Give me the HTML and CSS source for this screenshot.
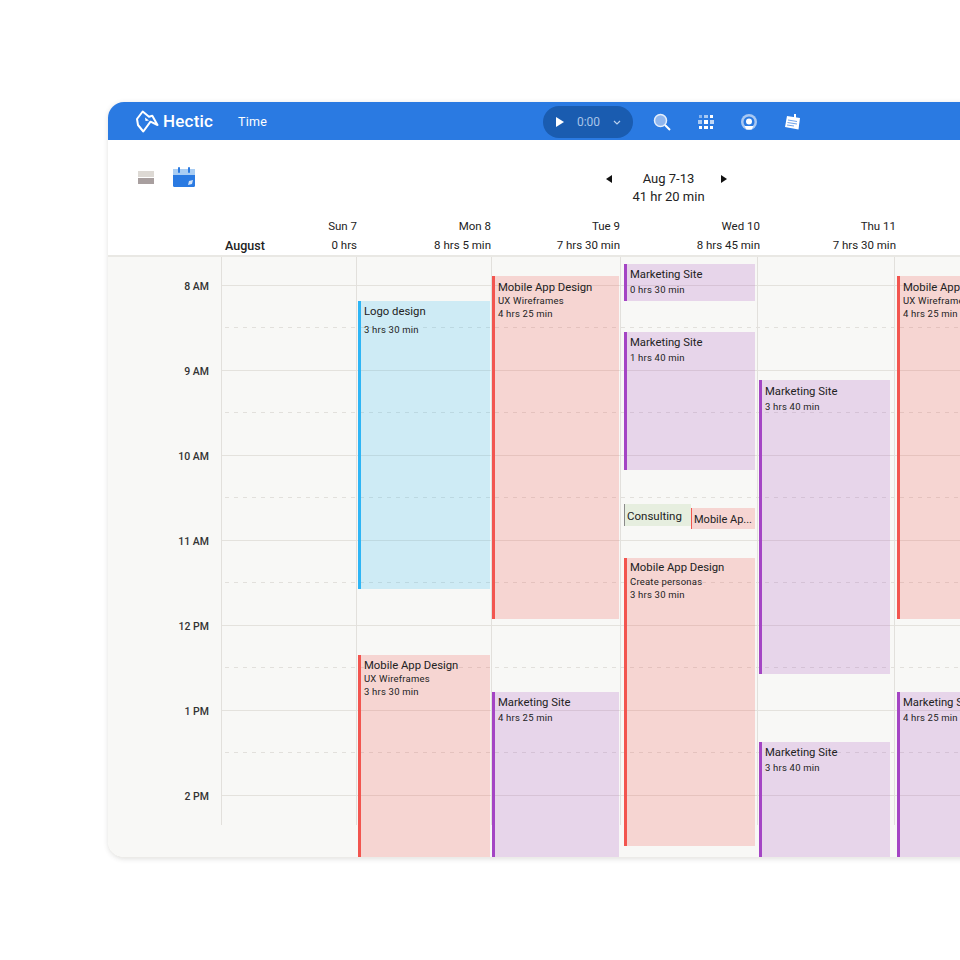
FILE: index.html
```html
<!DOCTYPE html>
<html>
  <head>
    <meta http-equiv="content-type" content="text/html; charset=utf-8" />
    <title>Hectic Time</title>
    <link rel="stylesheet" href="styles.css">
  </head>
  <body>
    <div class="window">
      <div class="topbar">
        <svg class="logo" viewBox="0 0 23 25" width="23" height="25"><path d="M1 10 L6.700 2.500 L13 7.700 L16.300 6.700 L21.500 16 L14.500 12.700 L7.300 22.500 L2 16 Z" fill="none" stroke="#fff" stroke-width="2" stroke-linejoin="round"/><path d="M9 8.500 L13 11.500 L9.500 12 Z" fill="#fff"/></svg>
        <span class="brand">Hectic</span>
        <span class="nav_time">Time</span>
        <div class="timer">
          <svg viewBox="0 0 8 10" width="8" height="10"><path d="M0 0 L8 5 L0 10 Z" fill="#fff"/></svg>
          <span class="timer_value">0:00</span>
          <svg viewBox="0 0 8 5" width="8" height="5"><path d="M1 1 L4 4 L7 1" fill="none" stroke="#b9d0ee" stroke-width="1.200"/></svg>
        </div>
        <div class="tools">
          <svg viewBox="0 0 18 18" width="18" height="18"><circle cx="7.500" cy="7.500" r="6" fill="#8fb6ee" stroke="#e4eefb" stroke-width="1.500"/><path d="M12 12 L17 17" stroke="#fff" stroke-width="2"/></svg>
          <svg viewBox="0 0 16 16" width="16" height="16" fill="#fff"><rect x="1" y="1" width="3" height="3" opacity=".45"/><rect x="6" y="1" width="4" height="3" opacity=".6"/><rect x="12" y="1" width="3" height="3"/><rect x="0" y="6" width="4" height="4" opacity=".6"/><rect x="6" y="6" width="4" height="4"/><rect x="12" y="6" width="4" height="4" opacity=".7"/><rect x="1" y="12" width="3" height="3"/><rect x="6" y="12" width="4" height="3"/><rect x="12" y="12" width="3" height="3"/></svg>
          <svg viewBox="0 0 16 16" width="16" height="16"><circle cx="8" cy="8" r="8" fill="#a9c8f2"/><circle cx="8" cy="8" r="5.500" fill="#2a7ae2"/><circle cx="8" cy="7.500" r="3" fill="#fff"/><path d="M3.500 12 H12.500 L10.500 15.500 H5.500 Z" fill="#fff"/></svg>
          <svg viewBox="0 0 18 18" width="18" height="18"><path d="M3 3 L16 5 L14.500 16.500 L1 14 Z" fill="#fff"/><path d="M11 1 V6" stroke="#fff" stroke-width="2"/><path d="M4 7 L13 8.500 M3.500 9.500 L13 11 M3 12 L10 13" stroke="#6fa3ea" stroke-width="1"/></svg>
        </div>
      </div>

      <div class="toolbar">
        <div class="views">
          <div class="view_list"><span></span><span></span></div>
          <svg viewBox="0 0 22 20" width="22" height="20"><rect x="0" y="2" width="22" height="18" rx="1.500" fill="#2a7ae2"/><rect x="0" y="2" width="22" height="6" fill="#a9cdf3"/><rect x="5" y="0" width="2" height="6" rx="1" fill="#2a7ae2"/><rect x="15" y="0" width="2" height="6" rx="1" fill="#2a7ae2"/><path d="M15 18 L16 14 L20 13 L19 17 Z" fill="#cfe1f8"/></svg>
        </div>
        <div class="week">
          <div class="week_nav">
            <span class="arrow_left"></span>
            <span class="week_dates">Aug 7-13</span>
            <span class="arrow_right"></span>
          </div>
          <div class="week_total">41 hr 20 min</div>
        </div>
      </div>

      <div class="columns day_heads">
        <div class="corner"></div>
        <div class="day_head first"><span class="month">August</span><div>Sun 7<br>0 hrs</div></div>
        <div class="day_head">Mon 8<br>8 hrs 5 min</div>
        <div class="day_head">Tue 9<br>7 hrs 30 min</div>
        <div class="day_head wed">Wed 10<br>8 hrs 45 min</div>
        <div class="day_head thu">Thu 11<br>7 hrs 30 min</div>
        <div class="day_head"></div>
      </div>

      <div class="body">
        <div class="hour_lines">
          <div class="hour"></div>
          <div class="hour"></div>
          <div class="hour"></div>
          <div class="hour"></div>
          <div class="hour"></div>
          <div class="hour"></div>
          <div class="hour last"></div>
        </div>
        <div class="columns">
          <div class="hours">
            <div>8 AM</div>
            <div>9 AM</div>
            <div>10 AM</div>
            <div>11 AM</div>
            <div>12 PM</div>
            <div>1 PM</div>
            <div>2 PM</div>
          </div>
          <div class="day"></div>
          <div class="day">
            <div class="track track_mon">
              <div class="event blue" style="top:44px;height:288px"><b class="title">Logo design</b><span class="loose">3 hrs 30 min</span></div>
              <div class="event red" style="top:398px;height:203px"><b class="title">Mobile App Design</b><span>UX Wireframes</span><span>3 hrs 30 min</span></div>
            </div>
          </div>
          <div class="day">
            <div class="track track_tue">
              <div class="event red lower" style="top:19px;height:343px"><b class="title">Mobile App Design</b><span>UX Wireframes</span><span>4 hrs 25 min</span></div>
              <div class="event purple" style="top:435px;height:166px"><b class="title">Marketing Site</b><span>4 hrs 25 min</span></div>
            </div>
          </div>
          <div class="day">
            <div class="track track_wed">
              <div class="event purple" style="top:7px;height:37px"><b class="title">Marketing Site</b><span>0 hrs 30 min</span></div>
              <div class="event purple" style="top:75px;height:138px"><b class="title">Marketing Site</b><span>1 hrs 40 min</span></div>
              <div class="event green tiny" style="top:247px;height:22px;left:0;width:67px"><b class="title">Consulting</b></div>
              <div class="event red tiny" style="top:251px;height:21px;left:67px;right:0"><b class="title">Mobile Ap...</b></div>
              <div class="event red upper" style="top:301px;height:288px"><b class="title">Mobile App Design</b><span>Create personas</span><span>3 hrs 30 min</span></div>
            </div>
          </div>
          <div class="day">
            <div class="track track_thu">
              <div class="event purple lower" style="top:123px;height:294px"><b class="title">Marketing Site</b><span>3 hrs 40 min</span></div>
              <div class="event purple" style="top:485px;height:116px"><b class="title">Marketing Site</b><span>3 hrs 40 min</span></div>
            </div>
          </div>
          <div class="day">
            <div class="track track_fri">
              <div class="event red lower" style="top:19px;height:343px"><b class="title">Mobile App Design</b><span>UX Wireframes</span><span>4 hrs 25 min</span></div>
              <div class="event purple" style="top:435px;height:166px"><b class="title">Marketing Site</b><span>4 hrs 25 min</span></div>
            </div>
          </div>
        </div>
      </div>
    </div>
  </body>
</html>
```

FILE: styles.css
```css
html, body {
  margin: 0;
  padding: 0;
  height: 100%;
  overflow: hidden;
  background: #fff;
}

body {
  font-family: "Roboto", "Liberation Sans", sans-serif;
  color: #222;
}

.window {
  width: 1000px;
  height: 756px;
  box-sizing: border-box;
  margin: 102px 0 0 108px;
  border-bottom: 1px solid #ecebe8;
  border-radius: 16px 0 0 16px;
  overflow: hidden;
  background: #fff;
  box-shadow: 0 1px 5px rgba(60, 60, 50, 0.16);
  display: flex;
  flex-direction: column;
}

/* top blue bar */
.topbar {
  height: 38px;
  background: #2a7ae2;
  display: flex;
  align-items: center;
  padding-left: 28px;
  color: #fff;
  flex-shrink: 0;
}

.brand {
  font-size: 17px;
  font-weight: 500;
  letter-spacing: 0.2px;
  margin-left: 4px;
}

.nav_time {
  font-size: 12.500px;
  letter-spacing: 0.2px;
  margin-left: 25px;
}

.timer {
  width: 90px;
  height: 32px;
  margin: 2px 0 0 276px;
  padding: 0 12px 0 13px;
  box-sizing: border-box;
  border-radius: 16px;
  background: #1a5cb0;
  display: flex;
  align-items: center;
  justify-content: space-between;
}

.timer_value {
  font-size: 12px;
  color: #a8c4e8;
}

.tools {
  display: flex;
  align-items: center;
  gap: 27px;
  margin: 2px 0 0 20px;
}

/* view switch + week */
.toolbar {
  height: 75px;
  display: flex;
  flex-shrink: 0;
}

.views {
  display: flex;
  align-items: flex-start;
  gap: 19px;
  padding: 27px 0 0 30px;
}

.view_list {
  width: 16px;
  margin-top: 4px;
}

.view_list span {
  display: block;
  height: 6px;
  background: #ddd9d4;
}

.view_list span + span {
  margin-top: 1px;
  background: #a89f9f;
}

.week {
  margin-left: 411px;
  width: 121px;
  padding-top: 30px;
  text-align: center;
  font-size: 13px;
  line-height: 18px;
}

.week_nav {
  display: flex;
  align-items: center;
  justify-content: space-between;
}

.week_dates {
  margin-left: 4px;
}

.week_total {
  padding-left: 4px;
}

.arrow_left, .arrow_right {
  width: 0;
  height: 0;
  border-top: 4.500px solid transparent;
  border-bottom: 4.500px solid transparent;
}

.arrow_left {
  border-right: 6px solid #111;
}

.arrow_right {
  border-left: 6px solid #111;
}

/* shared column widths */
.columns {
  display: grid;
  grid-template-columns: 113px 135px 135px 129px 137px 137px 137px;
}

.day_heads {
  height: 40px;
  flex-shrink: 0;
  border-bottom: 2px solid #e9e8e4;
}

.day_head {
  text-align: right;
  font-size: 11.500px;
  line-height: 19px;
  color: #222;
  padding-top: 2px;
}

.day_head.first {
  display: flex;
  justify-content: space-between;
  align-items: flex-end;
  margin-right: -1px;
}

.day_head.wed {
  margin-right: -3px;
}

.day_head.thu {
  margin-right: -2px;
}

.month {
  font-size: 12.500px;
  font-weight: 500;
  margin-left: 4px;
}

/* calendar body */
.body {
  position: relative;
  flex: 1;
  background: #f8f8f6;
}

.hour_lines {
  position: absolute;
  top: 28px;
  left: 113px;
  right: 0;
  border-top: 1px solid #e4e2dd;
}

.hour {
  height: 84px;
  border-bottom: 1px solid #e4e2dd;
  position: relative;
}

.hour::after {
  content: "";
  position: absolute;
  left: 4px;
  right: 0;
  top: 41px;
  height: 1px;
  background: repeating-linear-gradient(90deg, #e2e0dc 0 4px, transparent 4px 9px);
}

.hour.last::after {
  display: none;
}

.body .columns {
  position: relative;
  height: 100%;
}

.hours {
  text-align: right;
  padding: 22px 12px 0 0;
  font-size: 10.500px;
  font-weight: 500;
  color: #333;
}

.hours div {
  height: 85px;
  line-height: 15px;
}

.day {
  background: linear-gradient(#e2e0dc, #e2e0dc) left top / 1px 568px no-repeat;
}

.track {
  position: relative;
  height: 100%;
}

.track_mon {
  margin: 0 1px 0 2px;
}

.track_tue {
  margin: 0 1px 0 1px;
}

.track_wed {
  margin: 0 2px 0 4px;
}

.track_thu {
  margin: 0 4px 0 2px;
}

.track_fri {
  margin: 0 0 0 3px;
}

/* events */
.event {
  position: absolute;
  left: 0;
  right: 0;
  box-sizing: border-box;
  border-left: 3px solid;
  padding: 4px 0 0 3px;
  font-size: 9.500px;
  line-height: 13px;
  letter-spacing: 0.2px;
  white-space: nowrap;
  overflow: hidden;
}

.event.lower {
  padding-top: 5px;
}

.event.upper {
  padding-top: 3px;
}

.event span {
  display: block;
}

.title {
  display: block;
  font-size: 11.300px;
  font-weight: 400;
  line-height: 14px;
  letter-spacing: 0;
  margin-bottom: -1px;
}

.upper .title {
  margin-bottom: 0;
}

.purple .title {
  margin-bottom: 1px;
}

.loose {
  margin-top: 5px;
}

.blue {
  background: rgba(38, 183, 246, 0.2);
  border-color: #2db5f5;
}

.red {
  background: rgba(238, 73, 71, 0.2);
  border-color: #f2554f;
}

.purple {
  background: rgba(163, 73, 191, 0.2);
  border-color: #a445c4;
}

.green {
  background: rgba(158, 198, 136, 0.2);
  border-color: #8a8a8a;
}

.event.tiny {
  border-left-width: 1.500px;
  padding: 5px 0 0 2px;
}

.tiny .title {
  font-size: 11px;
}

.green .title {
  font-size: 11.500px;
}
```
